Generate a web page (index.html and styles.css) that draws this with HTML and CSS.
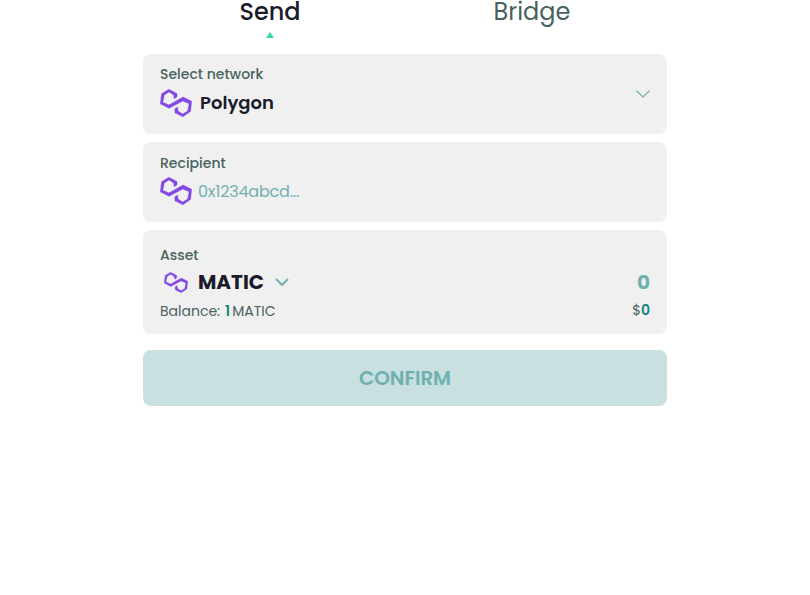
FILE: index.html
```html
<!DOCTYPE html>
<html lang="en">
<head>
<meta charset="utf-8">
<title>Send</title>
<link rel="stylesheet" href="styles.css">
</head>
<body>
<svg class="defs" aria-hidden="true">
  <symbol id="polygon" viewBox="0 0 32 28"><path d="M8.8.3 17 4.5V8L14.2 9.8 13.8 6.2 9 3 4.3 5.9 2.8 13.2 9 15.9 23 8 31.7 12.2 30.5 22.6 23 27.7 14.9 23.8V19.7L17.6 18 17.9 21.8 22.7 25 27.6 22.1 29.1 14.7 22.8 12 9 19.3.3 14.8 1.5 4.8Z" stroke="#8247e5" stroke-width=".4" stroke-linejoin="round"/></symbol>
</svg>
<main class="panel">
  <nav class="tabs">
    <div class="tab active"><span>Send</span><svg class="marker" viewBox="0 0 8 6"><path d="M4 0 8 6H0z"/></svg></div>
    <div class="tab"><span>Bridge</span></div>
  </nav>
  <section class="card network">
    <div>
      <div class="label">Select network</div>
      <div class="row"><svg class="logo"><use href="#polygon"/></svg><span class="name">Polygon</span></div>
    </div>
    <svg class="chevron" viewBox="0 0 14 8"><path d="M.5.8 7 7 13.5.8"/></svg>
  </section>
  <section class="card recipient">
    <div class="label">Recipient</div>
    <div class="row"><svg class="logo"><use href="#polygon"/></svg><span class="address">0x1234abcd...</span></div>
  </section>
  <section class="card asset">
    <div class="label">Asset</div>
    <div class="row token-row"><svg class="logo small"><use href="#polygon"/></svg><span class="token">MATIC</span><svg class="chevron bold" viewBox="0 0 14 8"><path d="M1 1 7 7 13 1"/></svg><span class="amount">0</span></div>
    <div class="row balance-row"><span>Balance:</span><b class="one">1</b><span class="unit">MATIC</span><span class="fiat">$<b>0</b></span></div>
  </section>
  <button class="confirm">CONFIRM</button>
</main>
</body>
</html>
```

FILE: styles.css
```css
* { box-sizing: border-box; }
body { margin: 0; background: #fff; color: #1a1b2b; font-family: Poppins, Inter, sans-serif; }
.defs { display: none; }
.panel { width: 524px; margin: 0 auto; display: flex; flex-direction: column; }
.tabs { height: 54px; display: grid; grid-template-columns: 254px 270px; }
.tab { display: flex; flex-direction: column; align-items: center; font-size: 24px; line-height: 24px; color: #48625f; white-space: nowrap; }
.tab.active { color: #1a1b2b; font-weight: 500; }
.marker { width: 8px; height: 6px; margin-top: 8px; fill: #3dd9a4; }
.card { background: #f0f0f0; border-radius: 8px; padding: 0 17px; margin-bottom: 8px; }
.network { height: 80px; display: flex; justify-content: space-between; align-items: center; padding-bottom: 8px; }
.recipient { height: 80px; padding-top: 11px; }
.asset { height: 104px; padding-top: 15px; margin-bottom: 16px; }
.label { font-size: 14px; line-height: 20px; font-weight: 500; color: #48625f; }
.row { display: flex; align-items: center; white-space: nowrap; }
.network .row { height: 28px; margin-top: 5px; }
.recipient .row { height: 28px; margin-top: 4px; }
.logo { width: 32px; height: 28px; fill: #8247e5; flex: none; }
.logo.small { width: 24px; height: 21px; margin-left: 4px; }
.name { font-size: 18px; line-height: 28px; font-weight: 600; margin-left: 8px; }
.address { font-size: 16px; line-height: 28px; padding-top: 2px; letter-spacing: -.2px; color: #70b0b0; margin-left: 6px; }
.chevron { width: 14px; height: 8px; fill: none; stroke: #70b0b0; stroke-width: 1.2; flex: none; }
.network .chevron { margin-top: 8px; }
.chevron.bold { stroke-width: 2; margin-left: 11px; }
.token-row { height: 34px; }
.token { font-size: 20px; font-weight: 700; margin-left: 10px; }
.amount { font-size: 20px; font-weight: 700; color: #70b0b0; margin-left: auto; }
.balance-row { height: 22px; font-size: 14px; color: #48625f; margin-top: 1px; }
.balance-row b { color: #15857c; font-weight: 600; }
.one { margin-left: 5px; }
.unit { margin-left: 2px; }
.fiat { margin-left: auto; padding-bottom: 1px; }
.confirm { height: 56px; padding: 0; border: 0; border-radius: 8px; background: #c8e0e0; color: #70b0b0; font: 600 20px/54px Poppins, Inter, sans-serif; letter-spacing: -.1px; }
```
